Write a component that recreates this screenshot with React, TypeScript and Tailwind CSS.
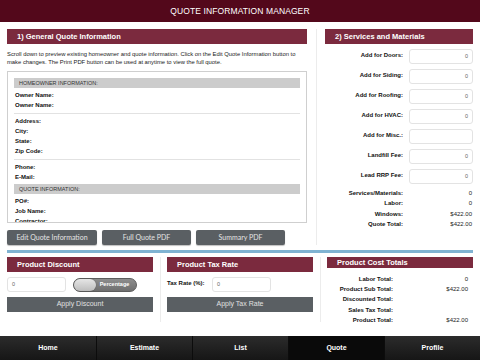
const FONT = "font-['Liberation_Sans','Helvetica','Arial',sans-serif]";

function SectionBar({ title }: { title: string }) {
  return (
    <div className="h-[15px] bg-[#7b2a3e] flex items-center pl-[10px] text-white text-[7.5px] font-bold">
      {title}
    </div>
  );
}

function GreyBar({ label }: { label: string }) {
  return (
    <div className="h-[10px] bg-[#cccccc] flex items-center pl-[5px] text-[5.5px] text-[#333]">
      {label}
    </div>
  );
}

function InfoRow({ label }: { label: string }) {
  return (
    <div className="h-[10px] flex items-center pl-[1px] text-[6px] font-bold text-[#111]">
      {label}
    </div>
  );
}

function Sep() {
  return <div className="h-px bg-[#e2e2e2] my-[2.5px]" />;
}

function GreyButton({ label, className = "" }: { label: string; className?: string }) {
  return (
    <button
      type="button"
      className={`h-[15px] bg-[#5a5f63] rounded-[2px] text-[#e4e4e4] text-[7px] font-['Lato',sans-serif] shadow-[0_1px_1px_rgba(0,0,0,0.25)] ${className}`}
    >
      {label}
    </button>
  );
}

function FieldInput({ value, className = "" }: { value?: string; className?: string }) {
  return (
    <div
      className={`h-[15px] bg-white border border-[#e3e3e3] rounded-[3px] flex items-center text-[5.5px] text-[#666] ${className}`}
    >
      {value}
    </div>
  );
}

const serviceInputs: [string, string][] = [
  ["Add for Doors:", "0"],
  ["Add for Siding:", "0"],
  ["Add for Roofing:", "0"],
  ["Add for HVAC:", "0"],
  ["Add for Misc.:", ""],
  ["Landfill Fee:", "0"],
  ["Lead RRP Fee:", "0"],
];

const serviceTotals: [string, string][] = [
  ["Services/Materials:", "0"],
  ["Labor:", "0"],
  ["Windows:", "$422.00"],
  ["Quote Total:", "$422.00"],
];

const costTotals: [string, string][] = [
  ["Labor Total:", "0"],
  ["Product Sub Total:", "$422.00"],
  ["Discounted Total:", ""],
  ["Sales Tax Total:", ""],
  ["Product Total:", "$422.00"],
];

const tabs = ["Home", "Estimate", "List", "Quote", "Profile"];

export default function App() {
  return (
    <div className={`w-[480px] h-[360px] bg-white flex flex-col overflow-hidden ${FONT}`}>
      <div className="h-[22px] shrink-0 bg-[#53081b] flex items-center justify-center text-white text-[8.5px] tracking-[0.1px]">
        QUOTE INFORMATION MANAGER
      </div>

      {/* top area */}
      <div className="flex px-[7px] pt-[7px] h-[223px] shrink-0">
        <div className="w-[300px] flex flex-col">
          <SectionBar title="1) General Quote Information" />
          <p className="mt-[6px] text-[5.85px] leading-[8px] text-[#222]">
            Scroll down to preview existing homeowner and quote information. Click on the Edit Quote Information button
            to make changes. The Print PDF button can be used at anytime to view the full quote.
          </p>
          <div className="mt-[5px] h-[152px] border border-[#cfcfcf] overflow-hidden px-[6px] pt-[6px]">
            <GreyBar label="HOMEOWNER INFORMATION:" />
            <div className="mt-[2px]" />
            <InfoRow label="Owner Name:" />
            <InfoRow label="Owner Name:" />
            <Sep />
            <InfoRow label="Address:" />
            <InfoRow label="City:" />
            <InfoRow label="State:" />
            <InfoRow label="Zip Code:" />
            <Sep />
            <InfoRow label="Phone:" />
            <InfoRow label="E-Mail:" />
            <div className="mt-[2px]" />
            <GreyBar label="QUOTE INFORMATION:" />
            <div className="mt-[2px]" />
            <InfoRow label="PO#:" />
            <InfoRow label="Job Name:" />
            <InfoRow label="Contractor:" />
          </div>
          <div className="mt-[7px] flex gap-[5px]">
            <GreyButton label="Edit Quote Information" className="w-[90px]" />
            <GreyButton label="Full Quote PDF" className="w-[89px]" />
            <GreyButton label="Summary PDF" className="w-[89px]" />
          </div>
        </div>

        <div className="w-[18px] flex justify-center">
          <div className="w-px h-full bg-[#ececec]" />
        </div>

        <div className="w-[148px] flex flex-col">
          <SectionBar title="2) Services and Materials" />
          <div className="mt-[5px] flex flex-col gap-[5px]">
            {serviceInputs.map(([label, value]) => (
              <div key={label} className="flex items-center">
                <div className="w-[78px] text-right text-[6px] font-bold text-[#111] pb-[2px]">{label}</div>
                <FieldInput value={value} className="ml-[6px] w-[64px] justify-end pr-[4px]" />
              </div>
            ))}
          </div>
          <div className="mt-[4px] flex flex-col">
            {serviceTotals.map(([label, value]) => (
              <div key={label} className="h-[10.5px] flex items-center">
                <div className="w-[78px] text-right text-[6px] font-bold text-[#111]">{label}</div>
                <div className="ml-[6px] w-[64px] text-right pr-[1px] text-[6px] text-[#222]">{value}</div>
              </div>
            ))}
          </div>
        </div>
      </div>

      <div className="mx-[7px] mt-[5px] h-[3px] bg-[#80b3d2] shrink-0" />

      {/* bottom panels */}
      <div className="flex px-[7px] mt-[4px] h-[65px] shrink-0">
        <div className="w-[146px] flex flex-col">
          <SectionBar title="Product Discount" />
          <div className="mt-[5px] flex items-center">
            <FieldInput value="0" className="w-[59px] pl-[4px]" />
            <div className="ml-[7px] w-[64px] h-[14px] rounded-full bg-gradient-to-b from-[#8d8d8d] to-[#6f6f6f] border border-[#5d5d5d] flex items-center relative">
              <div className="w-[22px] h-[12px] rounded-full bg-gradient-to-b from-[#e6e6e6] to-[#bdbdbd] shadow-[0_0_1px_rgba(0,0,0,0.5)]" />
              <span className="flex-1 text-center text-white text-[5.5px] font-bold pr-[3px]">Percentage</span>
            </div>
          </div>
          <button type="button" className="mt-[5px] h-[15px] w-full bg-[#5a5f63] text-[#e0e0e0] text-[7px]">
            Apply Discount
          </button>
        </div>

        <div className="w-[14px] flex justify-center">
          <div className="w-px h-full bg-[#ececec]" />
        </div>

        <div className="w-[146px] flex flex-col">
          <SectionBar title="Product Tax Rate" />
          <div className="mt-[5px] flex items-center">
            <div className="w-[45px] text-[6px] font-bold text-[#111] pb-[3px]">Tax Rate (%):</div>
            <FieldInput value="0" className="w-[59px] pl-[4px]" />
          </div>
          <button type="button" className="mt-[5px] h-[15px] w-full bg-[#5a5f63] text-[#e0e0e0] text-[7px]">
            Apply Tax Rate
          </button>
        </div>

        <div className="w-[14px] flex justify-center">
          <div className="w-px h-full bg-[#ececec]" />
        </div>

        <div className="w-[146px] flex flex-col">
          <SectionBar title="Product Cost Totals" />
          <div className="mt-[6px] flex flex-col">
            {costTotals.map(([label, value]) => (
              <div key={label} className="h-[10.3px] flex items-center">
                <div className="w-[66px] text-right text-[6px] font-bold text-[#111]">{label}</div>
                <div className="flex-1 text-right pr-[5px] text-[6px] text-[#222]">{value}</div>
              </div>
            ))}
          </div>
        </div>
      </div>

      <div className="flex-1" />

      {/* tab bar */}
      <div className="h-[24px] shrink-0 flex bg-gradient-to-b from-[#2c2c2c] to-[#161616]">
        {tabs.map((t, i) => (
          <div
            key={t}
            className={`w-[96px] flex items-center justify-center text-white text-[7px] font-bold ${
              i > 0 ? "border-l border-[#0c0c0c]" : ""
            } ${t === "Quote" ? "bg-[#0a0a0a]" : ""}`}
          >
            {t}
          </div>
        ))}
      </div>
    </div>
  );
}
